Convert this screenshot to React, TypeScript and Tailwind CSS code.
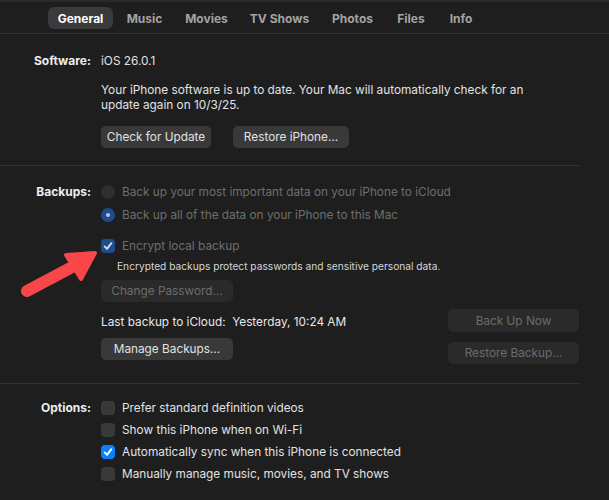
import React from "react";

const tabs = [
  { name: "General", w: "w-[65px]", active: true },
  { name: "Music", w: "w-[55px]" },
  { name: "Movies", w: "w-[61px]" },
  { name: "TV Shows", w: "w-[77px]" },
  { name: "Photos", w: "w-[61px]" },
  { name: "Files", w: "w-[48px]" },
  { name: "Info", w: "w-[44px]" },
];

const Check = ({ color = "#ffffff" }: { color?: string }) => (
  <svg viewBox="0 0 14 14" className="h-[14px] w-[14px]">
    <path
      d="M3.6 7.4 L6 9.9 L10.4 4.2"
      fill="none"
      stroke={color}
      strokeWidth="1.9"
      strokeLinecap="round"
      strokeLinejoin="round"
    />
  </svg>
);

const CheckBox = ({ checked, dim }: { checked?: boolean; dim?: boolean }) => {
  if (checked && dim)
    return (
      <div className="flex h-[14px] w-[14px] items-center justify-center rounded-[4px] bg-[#1f4c8a]">
        <Check color="#d4dcea" />
      </div>
    );
  if (checked)
    return (
      <div className="flex h-[14px] w-[14px] items-center justify-center rounded-[4px] bg-[#0b7dfd]">
        <Check />
      </div>
    );
  return <div className="h-[14px] w-[14px] rounded-[4px] bg-[#393939]" />;
};

const Button = ({
  children,
  disabled,
  className = "",
}: {
  children: React.ReactNode;
  disabled?: boolean;
  className?: string;
}) => (
  <div
    className={`flex h-[22px] items-center justify-center whitespace-nowrap rounded-[5px] text-[11.8px] ${
      disabled ? "bg-[#2a2a2a] text-[#6c6c6c]" : "bg-[#393939] text-[#e2e2e2]"
    } ${className}`}
  >
    {children}
  </div>
);

const Label = ({ children }: { children: React.ReactNode }) => (
  <div className="w-[91px] shrink-0 text-right text-[12px] font-bold text-[#ededed]">
    {children}
  </div>
);

export default function App() {
  return (
    <div className="relative h-[500px] w-[609px] overflow-hidden bg-[#1e1e1e] font-[Inter,'Liberation_Sans',sans-serif] text-[11.8px] leading-[16px] text-[#e2e2e2]">
      <div className="h-[2px] bg-[#2a2a2a]" />
      {/* tab bar */}
      <div className="flex h-[32px] gap-[4px] border-b border-[#303030] pl-[48px] pt-[5px]">
        {tabs.map((t) => (
          <div
            key={t.name}
            className={`flex h-[22px] items-center justify-center rounded-[6px] pt-[1px] text-[12px] font-bold ${t.w} ${
              t.active ? "bg-[#3a3a3a] text-white" : "text-[#a3a3a3]"
            }`}
          >
            {t.name}
          </div>
        ))}
      </div>

      <div className="w-[580px]">
        {/* Software */}
        <div className="border-b border-[#333333] pb-[17px] pt-[19px]">
          <div className="flex gap-[10px]">
            <Label>Software:</Label>
            <div>iOS 26.0.1</div>
          </div>
          <div className="ml-[101px] mt-[14px] w-[440px] leading-[15px]">
            Your iPhone software is up to date. Your Mac will automatically check for an update again on
            10/3/25.
          </div>
          <div className="ml-[101px] mt-[13px] flex gap-[22px]">
            <Button className="w-[110px]">Check for Update</Button>
            <Button className="w-[116px]">Restore iPhone…</Button>
          </div>
        </div>

        {/* Backups */}
        <div className="border-b border-[#333333] pb-[19px] pt-[18px]">
          <div className="flex h-[16px] items-center gap-[10px]">
            <Label>Backups:</Label>
            <div className="flex items-center gap-[7px]">
              <div className="h-[14px] w-[14px] rounded-full bg-[#2e2e2e]" />
              <span className="text-[#6e6e6e]">
                Back up your most important data on your iPhone to iCloud
              </span>
            </div>
          </div>
          <div className="ml-[101px] mt-[7px] flex h-[16px] items-center gap-[7px]">
            <div className="flex h-[14px] w-[14px] items-center justify-center rounded-full bg-[#1f4c8a]">
              <div className="h-[4px] w-[4px] rounded-full bg-[#b9c5d8]" />
            </div>
            <span className="text-[#6e6e6e]">Back up all of the data on your iPhone to this Mac</span>
          </div>
          <div className="ml-[101px] mt-[15px] flex h-[16px] items-center gap-[7px]">
            <CheckBox checked dim />
            <span className="text-[#6e6e6e]">Encrypt local backup</span>
          </div>
          <div className="ml-[117px] mt-[5px] text-[10.2px] leading-[14px] text-[#d6d6d6]">
            Encrypted backups protect passwords and sensitive personal data.
          </div>
          <div className="ml-[101px] mt-[7px]">
            <Button disabled className="w-[132px]">
              Change Password…
            </Button>
          </div>
          <div className="ml-[101px] flex items-start">
            <div className="flex-1">
              <div className="mt-[12px] text-[#e8e8e8]">
                Last backup to iCloud:&nbsp; Yesterday, 10:24 AM
              </div>
              <Button className="mt-[8px] w-[132px]">Manage Backups…</Button>
            </div>
            <div className="mr-[1px] w-[131px]">
              <Button disabled className="mt-[7px] h-[23px]">
                Back Up Now
              </Button>
              <Button disabled className="mt-[10px]">
                Restore Backup…
              </Button>
            </div>
          </div>
        </div>

        {/* Options */}
        <div className="pt-[16px]">
          <div className="flex h-[16px] items-center gap-[10px]">
            <Label>Options:</Label>
            <div className="flex items-center gap-[7px]">
              <CheckBox />
              <span>Prefer standard definition videos</span>
            </div>
          </div>
          {[
            { t: "Show this iPhone when on Wi-Fi" },
            { t: "Automatically sync when this iPhone is connected", c: true },
            { t: "Manually manage music, movies, and TV shows" },
          ].map((o) => (
            <div key={o.t} className="ml-[101px] mt-[6px] flex h-[16px] items-center gap-[7px]">
              <CheckBox checked={o.c} />
              <span>{o.t}</span>
            </div>
          ))}
        </div>
      </div>

      {/* annotation arrow */}
      <svg className="absolute left-0 top-0 h-[500px] w-[609px]" viewBox="0 0 609 500">
        <line x1="27" y1="291" x2="76" y2="265" stroke="#f8464b" strokeWidth="12" strokeLinecap="round" />
        <polygon
          points="95,253 66,255 81,279"
          fill="#f8464b"
          stroke="#f8464b"
          strokeWidth="4"
          strokeLinejoin="round"
        />
      </svg>
    </div>
  );
}
